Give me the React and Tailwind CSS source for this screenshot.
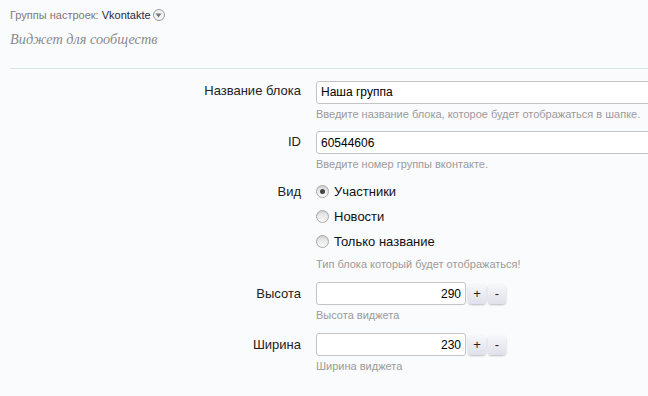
import React from "react";

const sans = { fontFamily: '"Liberation Sans", Arial, sans-serif' };

function Radio({ checked, label }) {
  return (
    <div className="flex items-center h-[25px]">
      <span className="relative w-[13px] h-[13px] rounded-full border border-[#a9a9a9] bg-gradient-to-b from-[#dcdcdc] to-[#fafafa] flex items-center justify-center shadow-[inset_0_1px_1px_rgba(0,0,0,0.08)]">
        {checked && <span className="w-[5px] h-[5px] rounded-full bg-[#444]" />}
      </span>
      <span className="ml-[5px] text-[13px] text-[#111]">{label}</span>
    </div>
  );
}

function Hint({ children }) {
  return <div className="mt-[3px] text-[11px] leading-[14px] text-[#9a9a9a]">{children}</div>;
}

function Label({ children }) {
  return (
    <div className="w-[302px] shrink-0 text-right text-[13px] leading-[23px] text-[#222] pr-[1px]">
      {children}
    </div>
  );
}

function Btn({ children }) {
  return (
    <button className="w-[18px] h-[20px] ml-[2px] rounded-[4px] bg-gradient-to-b from-[#f7f7fb] to-[#dfe0ea] shadow-[0_1px_2px_rgba(0,0,0,0.25)] text-[13px] leading-[20px] text-[#222] flex items-center justify-center">
      {children}
    </button>
  );
}

const inputCls =
  "h-[23px] px-[4px] border border-[#c4c4c4] rounded-[3px] bg-white text-[12px] text-black outline-none";

export default function App() {
  return (
    <div className="w-[648px] h-[396px] overflow-hidden bg-[#fafbfd]" style={sans}>
      <div className="pl-[10px] pt-[8px]">
        <div className="flex items-center h-[14px] text-[11px] leading-[14px]">
          <span className="text-[#7a7a7a]">Группы настроек:&nbsp;</span>
          <span className="text-[#1c2a44]">Vkontakte</span>
          <span className="ml-[2px] w-[12px] h-[12px] rounded-full border border-[#9a9a9a] bg-[#f4f4f6] flex items-center justify-center">
            <svg width="7" height="5" viewBox="0 0 7 5"><path d="M0.5 0.5 L6.5 0.5 L3.5 4.5 Z" fill="#777" /></svg>
          </span>
        </div>
        <div
          className="mt-[8px] text-[14.3px] leading-[18px] italic text-[#8a8a8a]"
          style={{ fontFamily: '"Liberation Serif", "Times New Roman", serif' }}
        >
          Виджет для сообществ
        </div>
      </div>
      <div className="ml-[10px] mt-[20px] h-px bg-[#d3e5f1]" />

      <div className="mt-[10px] flex flex-col">
        <div className="flex">
          <Label>Название блока</Label>
          <div className="ml-[14px]">
            <input readOnly value="Наша группа" className={inputCls + " w-[350px]"} style={sans} />
            <Hint>Введите название блока, которое будет отображаться в шапке.</Hint>
          </div>
        </div>

        <div className="flex mt-[9px]">
          <Label>ID</Label>
          <div className="ml-[14px]">
            <input readOnly value="60544606" className={inputCls + " w-[350px]"} style={sans} />
            <Hint>Введите номер группы вконтакте.</Hint>
          </div>
        </div>

        <div className="flex mt-[8px]">
          <div className="w-[302px] shrink-0 text-right text-[13px] leading-[25px] text-[#222] pr-[1px]">Вид</div>
          <div className="ml-[14px]">
            <Radio checked label="Участники" />
            <Radio label="Новости" />
            <Radio label="Только название" />
            <Hint>Тип блока который будет отображаться!</Hint>
          </div>
        </div>

        <div className="flex mt-[11px]">
          <Label>Высота</Label>
          <div className="ml-[14px]">
            <div className="flex items-center">
              <input readOnly value="290" className={inputCls + " w-[150px] text-right"} style={sans} />
              <Btn>+</Btn>
              <Btn>-</Btn>
            </div>
            <Hint>Высота виджета</Hint>
          </div>
        </div>

        <div className="flex mt-[11px]">
          <Label>Ширина</Label>
          <div className="ml-[14px]">
            <div className="flex items-center">
              <input readOnly value="230" className={inputCls + " w-[150px] text-right"} style={sans} />
              <Btn>+</Btn>
              <Btn>-</Btn>
            </div>
            <Hint>Ширина виджета</Hint>
          </div>
        </div>
      </div>
    </div>
  );
}
